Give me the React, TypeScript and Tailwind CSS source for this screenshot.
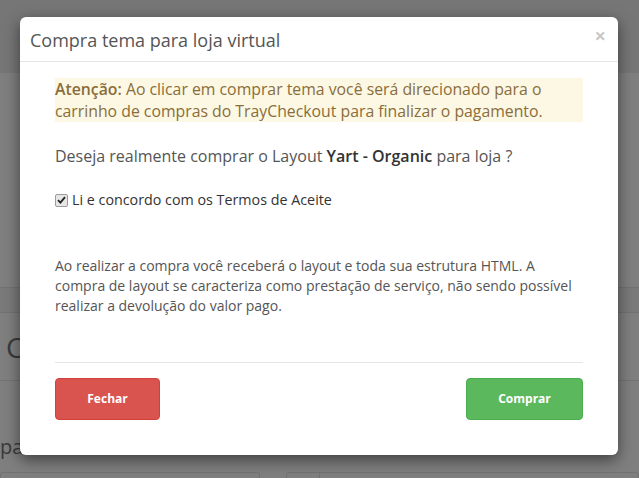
import React from "react";

export default function App() {
  return (
    <div
      className="relative w-[639px] h-[478px] overflow-hidden bg-[#7f7f7f]"
      style={{ fontFamily: '"Open Sans", "Noto Sans", sans-serif' }}
    >
      {/* background page (dimmed) */}
      <div className="flex flex-col">
        <div className="h-[73px] bg-[#767676]" />
        <div className="h-[214px]" />
        <div className="h-[26px] bg-[#7a7a7a] border-y border-[#727272]" />
        <div className="h-[68px] border-b border-[#747474] flex items-center pl-[6px]">
          <span className="text-[28px] text-[#3a3a3a] leading-none">C</span>
        </div>
        <div className="h-[91px] flex items-end pb-[15px]">
          <span className="text-[20px] text-[#3a3a3a] leading-none">pa</span>
        </div>
        <div className="flex gap-[26px] h-[20px]">
          <div className="w-[260px] border border-[#727272] rounded-[3px]" />
          <div className="flex-1 border border-[#727272] rounded-[3px] flex">
            <div className="w-[33px] border-r border-[#727272]" />
          </div>
        </div>
      </div>

      {/* modal */}
      <div className="absolute left-[20px] top-[17px] w-[598px] h-[438px] bg-white rounded-[6px] shadow-[0_5px_15px_rgba(0,0,0,0.5)] flex flex-col">
        <div className="h-[45px] border-b border-[#e5e5e5] flex items-center justify-between pl-[10px] pr-[12px]">
          <h4 className="text-[18px] text-[#555] leading-none pt-[1px]">Compra tema para loja virtual</h4>
          <span className="text-[20px] text-[#c8c8c8] leading-none font-bold -mt-[6px]">×</span>
        </div>
        <div className="flex flex-col px-[35px] pt-[16px]">
          <div className="bg-[#fcf8e3] text-[#8a6d3b] text-[15.8px] leading-[22px]">
            <strong className="font-semibold">Atenção:</strong> Ao clicar em comprar tema você será direcionado para o carrinho de compras do TrayCheckout para finalizar o pagamento.
          </div>
          <p className="mt-[23px] text-[16px] leading-[22px] text-[#555]">
            Deseja realmente comprar o Layout <strong className="font-semibold text-[#333]">Yart - Organic</strong> para loja ?
          </p>
          <label className="mt-[23px] flex items-center gap-[4px] text-[14.3px] leading-[20px] text-[#333]">
            <span className="w-[13px] h-[13px] rounded-[2px] border border-[#9a9a9a] bg-[#e6e6e6] flex items-center justify-center">
              <svg width="9" height="8" viewBox="0 0 9 8">
                <path d="M1 4.2 L3.4 6.6 L8 1.2" stroke="#222" strokeWidth="1.8" fill="none" />
              </svg>
            </span>
            Li e concordo com os Termos de Aceite
          </label>
          <p className="mt-[46px] text-[14px] leading-[20px] text-[#555]">
            Ao realizar a compra você receberá o layout e toda sua estrutura HTML. A compra de layout se caracteriza como prestação de serviço, não sendo possível realizar a devolução do valor pago.
          </p>
          <div className="mt-[46px] border-t border-[#e5e5e5]" />
          <div className="mt-[15px] flex justify-between">
            <button className="w-[105px] h-[42px] rounded-[4px] bg-[#d9534f] border border-[#d43f3a] text-white text-[12px] font-bold">
              Fechar
            </button>
            <button className="w-[117px] h-[42px] rounded-[4px] bg-[#5cb85c] border border-[#4cae4c] text-white text-[12px] font-bold">
              Comprar
            </button>
          </div>
        </div>
      </div>
    </div>
  );
}
